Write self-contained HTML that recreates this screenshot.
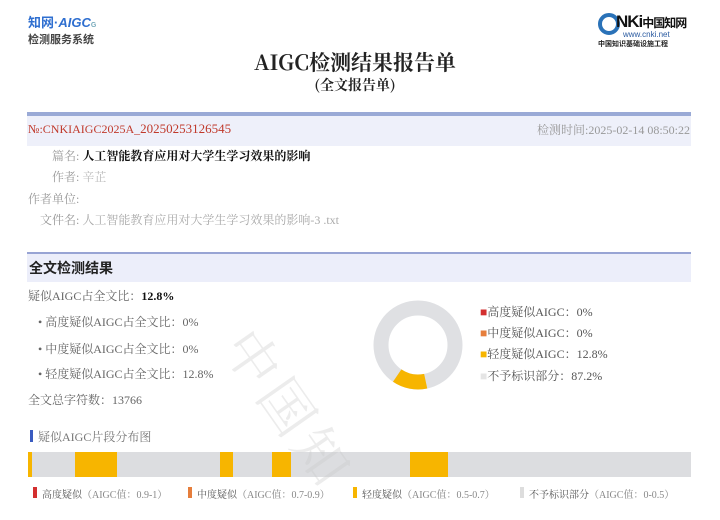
<!DOCTYPE html>
<html><head><meta charset="utf-8"><style>
*{margin:0;padding:0;box-sizing:border-box}
html{width:720px;height:520px;overflow:hidden}
body{width:720px;height:520px;background:#fff;position:relative;overflow:hidden;font-family:"Liberation Serif","Noto Serif CJK SC",serif;color:#333}
.a{position:absolute;white-space:nowrap}
.s{font-family:"Liberation Sans","Noto Sans CJK SC",sans-serif}
.g{color:#999}
</style></head><body>
<div class="a s" style="left:28px;top:12px;font-size:13px;font-weight:bold;color:#2f6fd0">知网·<span style="font-style:italic">AIGC</span><span style="font-size:7px;color:#7ab">G</span></div>
<div class="a s" style="left:28px;top:31px;font-size:11px;font-weight:bold;color:#444">检测服务系统</div>
<div class="a" style="left:598px;top:13px;width:22px;height:22px;border-radius:50%;border:4px solid #2a72b8"></div>
<div class="a s" style="left:616px;top:12px;font-size:17px;font-weight:900;color:#111;letter-spacing:-1px">NKi<span style="font-size:12px;font-weight:bold">中国知网</span></div>
<div class="a s" style="left:623px;top:30px;font-size:8px;color:#2a5aa0">www.cnki.net</div>
<div class="a s" style="left:598px;top:39px;font-size:7px;color:#222;font-weight:bold">中国知识基础设施工程</div>
<div class="a" style="left:0;width:710px;text-align:center;top:47px;font-size:21px;color:#222;font-family:'Liberation Sans Narrow','Noto Serif CJK SC',serif;font-weight:bold">AIGC检测结果报告单</div>
<div class="a" style="left:0;width:710px;text-align:center;top:75px;font-size:14px;color:#222;font-family:'Noto Serif CJK SC',serif;font-weight:bold">(全文报告单)</div>
<div class="a" style="left:27px;top:112px;width:664px;height:34px;background:#eef0fa;border-top:4px solid #9aaad6"></div>
<div class="a" style="left:28px;top:121px;font-size:12px;color:#c0392b">№:CNKIAIGC2025A_<span style="font-size:13px">20250253126545</span></div>
<div class="a g" style="right:30px;top:121px;font-size:12px">检测时间:2025-02-14 08:50:22</div>
<div class="a" style="left:52px;top:147px;font-size:12px"><span class="g">篇名:</span> <b style="color:#111">人工智能教育应用对大学生学习效果的影响</b></div>
<div class="a" style="left:52px;top:168px;font-size:12px"><span class="g">作者:</span> <span style="color:#bbb">辛芷</span></div>
<div class="a g" style="left:28px;top:190px;font-size:12px">作者单位:</div>
<div class="a" style="left:40px;top:211px;font-size:12px"><span class="g">文件名:</span> <span style="color:#aaa">人工智能教育应用对大学生学习效果的影响-3 .txt</span></div>
<div class="a" style="left:27px;top:252px;width:664px;height:30px;background:#eceefa;border-top:2px solid #98a4d4"></div>
<div class="a s" style="left:29px;top:258px;font-size:14px;font-weight:bold;color:#222">全文检测结果</div>
<div class="a" style="left:28px;top:287px;font-size:12px;color:#666">疑似AIGC占全文比：<b style="color:#111">12.8%</b></div>
<div class="a" style="left:38px;top:313px;font-size:12px;color:#666">• 高度疑似AIGC占全文比：0%</div>
<div class="a" style="left:38px;top:340px;font-size:12px;color:#666">• 中度疑似AIGC占全文比：0%</div>
<div class="a" style="left:38px;top:365px;font-size:12px;color:#666">• 轻度疑似AIGC占全文比：12.8%</div>
<div class="a" style="left:28px;top:391px;font-size:12px;color:#666">全文总字符数：13766</div>
<svg class="a" style="left:370px;top:298px" width="96" height="96" viewBox="0 0 96 96">
<circle cx="48" cy="47" r="37" fill="none" stroke="#dfe0e3" stroke-width="15"/>
<circle cx="48" cy="47" r="37" fill="none" stroke="#f7b500" stroke-width="15" stroke-dasharray="29.8 300" transform="rotate(78 48 47)"/>
</svg>
<div class="a" style="left:480px;top:303px;font-size:12px;color:#555"><span style="color:#d32f2f">■</span>高度疑似AIGC：0%</div>
<div class="a" style="left:480px;top:324px;font-size:12px;color:#555"><span style="color:#e67e3c">■</span>中度疑似AIGC：0%</div>
<div class="a" style="left:480px;top:345px;font-size:12px;color:#555"><span style="color:#f7b500">■</span>轻度疑似AIGC：12.8%</div>
<div class="a" style="left:480px;top:367px;font-size:12px;color:#555"><span style="color:#e5e5e5">■</span>不予标识部分：87.2%</div>
<div class="a" style="left:30px;top:430px;width:3px;height:12px;background:#3a5bc0"></div>
<div class="a" style="left:38px;top:428px;font-size:12px;color:#777">疑似AIGC片段分布图</div>
<div class="a" style="left:28px;top:452px;width:663px;height:25px;background:#dcdde0"></div>
<div class="a" style="left:28px;top:452px;width:4px;height:25px;background:#f7b500"></div>
<div class="a" style="left:75px;top:452px;width:42px;height:25px;background:#f7b500"></div>
<div class="a" style="left:220px;top:452px;width:13px;height:25px;background:#f7b500"></div>
<div class="a" style="left:272px;top:452px;width:19px;height:25px;background:#f7b500"></div>
<div class="a" style="left:410px;top:452px;width:38px;height:25px;background:#f7b500"></div>
<div class="a" style="left:33px;top:486px;font-size:10px;color:#888"><span style="display:inline-block;width:4px;height:11px;background:#d32f2f;margin-right:5px"></span><span style="color:#555">高度疑似</span>（AIGC值：0.9-1）</div>
<div class="a" style="left:188px;top:486px;font-size:10px;color:#888"><span style="display:inline-block;width:4px;height:11px;background:#e67e3c;margin-right:5px"></span><span style="color:#555">中度疑似</span>（AIGC值：0.7-0.9）</div>
<div class="a" style="left:353px;top:486px;font-size:10px;color:#888"><span style="display:inline-block;width:4px;height:11px;background:#f7b500;margin-right:5px"></span><span style="color:#555">轻度疑似</span>（AIGC值：0.5-0.7）</div>
<div class="a" style="left:520px;top:486px;font-size:10px;color:#888"><span style="display:inline-block;width:4px;height:11px;background:#ddd;margin-right:5px"></span><span style="color:#555">不予标识部分</span>（AIGC值：0-0.5）</div>
<svg style="position:absolute;left:0;top:0;pointer-events:none" width="720" height="520" viewBox="0 0 720 520">
<text x="0" y="0" transform="translate(262 318) rotate(55)" dy="50" font-size="54" letter-spacing="6" fill="rgba(200,200,200,0.35)" font-family="Noto Serif CJK SC, serif">中国知</text>
</svg>
</body></html>
